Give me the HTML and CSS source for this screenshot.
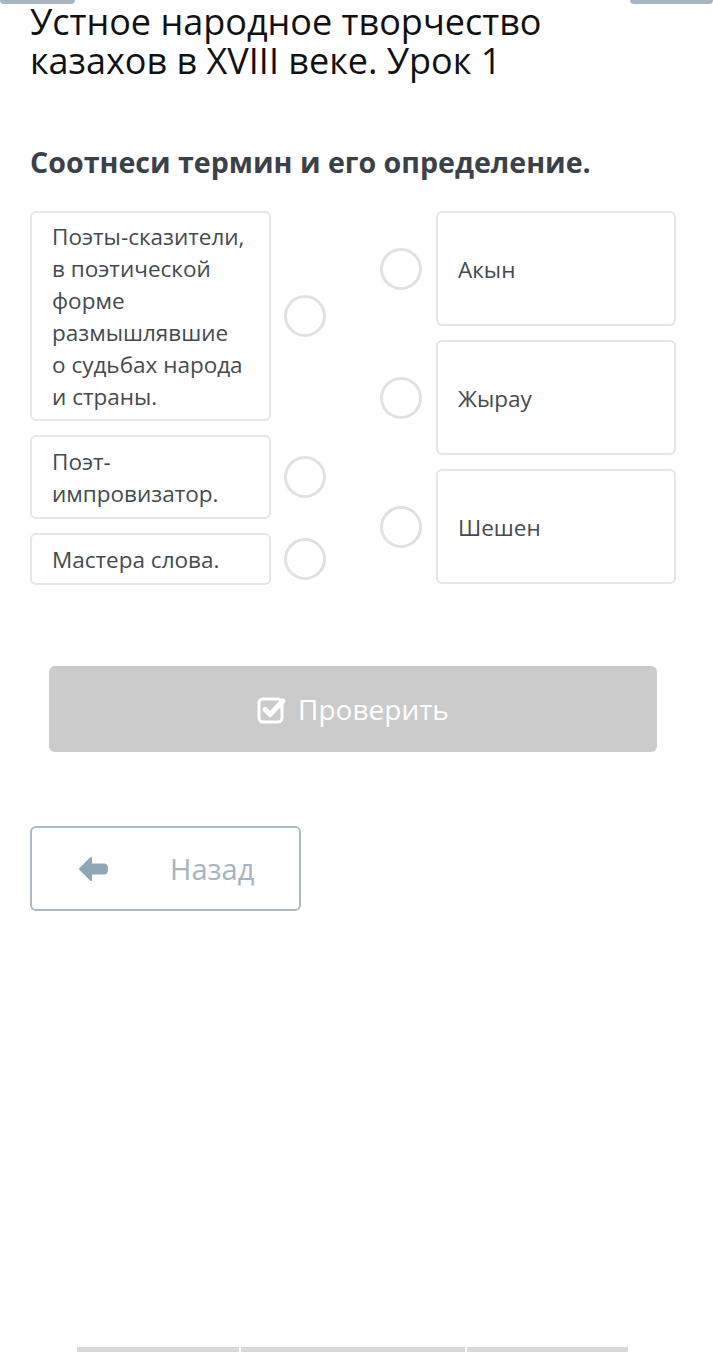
FILE: index.html
```html
<!DOCTYPE html>
<html lang="ru">
<head>
    <meta charset="UTF-8">
    <meta name="viewport" content="width=device-width, initial-scale=1.0">
    <title>Устное народное творчество казахов в XVIII веке. Урок 1</title>
    <link rel="stylesheet" href="styles.css">
</head>
<body>
    <div class="top-tabs">
        <span class="tab tab-left"></span>
        <span class="tab tab-right"></span>
    </div>

    <div class="page">
        <h1 class="lesson-title">Устное народное творчество казахов в XVIII веке. Урок 1</h1>
        <h2 class="task-title">Соотнеси термин и его определение.</h2>

        <div class="match">
            <div class="column column-left">
                <div class="pair">
                    <div class="card card-tall">Поэты-сказители, в поэтической форме размышлявшие о судьбах народа и страны.</div>
                    <span class="dot"></span>
                </div>
                <div class="pair">
                    <div class="card">Поэт-импровизатор.</div>
                    <span class="dot"></span>
                </div>
                <div class="pair">
                    <div class="card">Мастера слова.</div>
                    <span class="dot"></span>
                </div>
            </div>
            <div class="column column-right">
                <div class="pair">
                    <span class="dot"></span>
                    <div class="card card-term">Акын</div>
                </div>
                <div class="pair">
                    <span class="dot"></span>
                    <div class="card card-term">Жырау</div>
                </div>
                <div class="pair">
                    <span class="dot"></span>
                    <div class="card card-term">Шешен</div>
                </div>
            </div>
        </div>

        <button class="btn-check" type="button">
            <svg class="icon-check" viewBox="0 0 30 30" width="30" height="30">
                <rect x="2" y="4" width="23" height="23" rx="4" fill="none" stroke="#fff" stroke-width="3"/>
                <path d="M8 14.5 L13 19.5 L26 6" fill="none" stroke="#fff" stroke-width="5" stroke-linecap="round" stroke-linejoin="round"/>
            </svg>
            Проверить
        </button>

        <button class="btn-back" type="button">
            <svg class="icon-arrow" viewBox="0 0 30 26" width="30" height="26">
                <path d="M13 2 L2 13 L13 24 L13 17.5 L26 17.5 Q29 17.5 29 13 Q29 8.5 26 8.5 L13 8.5 Z" fill="#8fa6b6" stroke="#8fa6b6" stroke-width="2" stroke-linejoin="round"/>
            </svg>
            <span class="btn-back-text">Назад</span>
        </button>
    </div>

    <div class="bottom-tabs">
        <span class="bar bar-1"></span>
        <span class="bar bar-2"></span>
        <span class="bar bar-3"></span>
    </div>
</body>
</html>
```

FILE: styles.css
```css
body {
    margin: 0;
    font-family: "Open Sans", "Noto Sans", sans-serif;
    background-color: #fff;
    color: #3f4449;
    height: 1352px;
    position: relative;
    overflow: hidden;
}

.top-tabs {
    display: flex;
    justify-content: space-between;
    height: 4px;
}

.tab {
    display: block;
    height: 4px;
    background-color: #a7b6c1;
    border-radius: 0 0 6px 6px;
}

.tab-left {
    width: 75px;
}

.tab-right {
    width: 83px;
}

.page {
    padding: 0 30px;
}

.lesson-title {
    max-width: 560px;
    margin: -2px 0 0;
    font-size: 36px;
    line-height: 39px;
    font-weight: 400;
    color: #111;
}

.task-title {
    margin: 64px 0 31px;
    font-size: 28.6px;
    line-height: 36px;
    font-weight: 700;
    color: #3b4149;
}

.match {
    display: flex;
    justify-content: space-between;
    width: 646px;
}

.column {
    display: flex;
    flex-direction: column;
    gap: 14px;
}

.pair {
    display: flex;
    align-items: center;
    gap: 13px;
}

.column-right .pair {
    gap: 14px;
}

.card {
    box-sizing: border-box;
    width: 241px;
    border: 2px solid #e4e6e8;
    border-radius: 6px;
    padding: 9px 24px 7px 20px;
    font-size: 22.5px;
    line-height: 32px;
    color: #444a50;
}

.card-tall {
    padding-top: 8px;
    padding-bottom: 6px;
}

.card-term {
    width: 240px;
    height: 115px;
    display: flex;
    align-items: center;
}

.dot {
    flex: none;
    box-sizing: border-box;
    width: 42px;
    height: 42px;
    border: 3px solid #dfe1e3;
    border-radius: 50%;
}

.btn-check {
    display: flex;
    align-items: center;
    justify-content: center;
    gap: 11px;
    width: 608px;
    height: 86px;
    margin: 81px 0 0 19px;
    border: none;
    border-radius: 6px;
    background-color: #cbcbcb;
    color: #fff;
    font-family: "Open Sans", sans-serif;
    font-size: 28px;
    padding: 0;
}

.icon-check {
    margin-top: 1px;
}

.btn-back {
    display: flex;
    align-items: center;
    box-sizing: border-box;
    width: 271px;
    height: 85px;
    margin-top: 74px;
    padding: 0 0 0 46px;
    border: 2px solid #abbac5;
    border-radius: 6px;
    background-color: #fff;
    font-family: "Open Sans", sans-serif;
    font-size: 29px;
    color: #a6b4be;
}

.btn-back-text {
    margin-left: 62px;
}

.bottom-tabs {
    position: absolute;
    left: 77px;
    bottom: 0;
    display: flex;
    gap: 2px;
}

.bar {
    display: block;
    height: 5px;
    background-color: #d9d9d9;
}

.bar-1 {
    width: 162px;
}

.bar-2 {
    width: 224px;
}

.bar-3 {
    width: 161px;
}
```
